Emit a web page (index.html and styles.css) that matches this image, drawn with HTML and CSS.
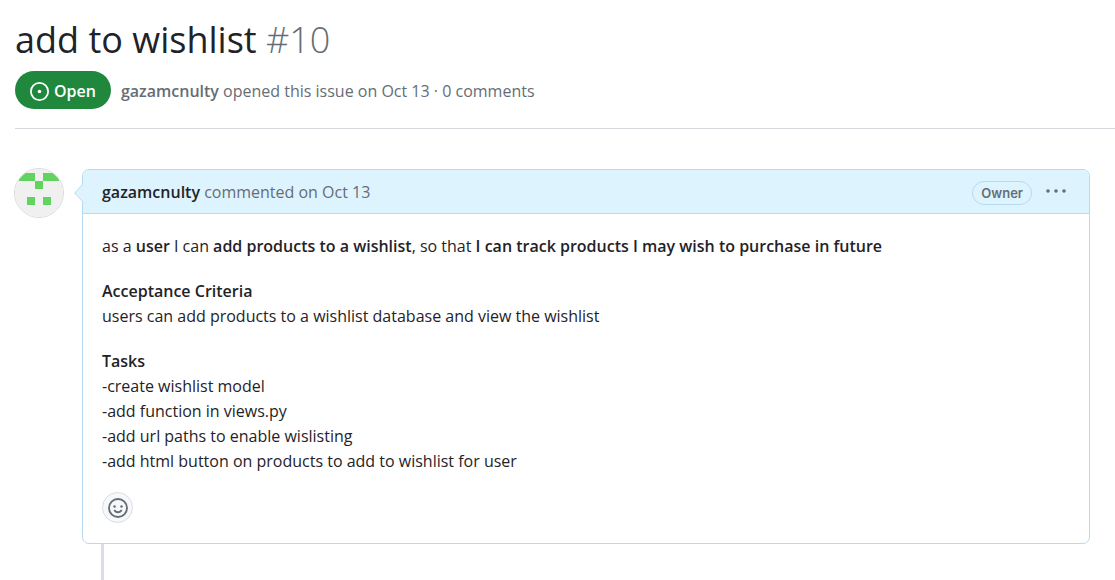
FILE: index.html
```html
<!DOCTYPE html>
<html lang="en">
<head>
<meta charset="utf-8">
<meta name="viewport" content="width=device-width, initial-scale=1">
<title>add to wishlist · Issue #10</title>
<link rel="stylesheet" href="styles.css">
</head>
<body>
<main class="page">
  <header class="issue-header">
    <h1 class="issue-title">add to wishlist <span class="issue-number">#10</span></h1>
    <div class="issue-meta">
      <span class="state">
        <svg class="state-icon" viewBox="0 0 16 16" aria-hidden="true"><path d="M8 9.5a1.5 1.5 0 1 0 0-3 1.5 1.5 0 0 0 0 3Z"/><path d="M8 0a8 8 0 1 1 0 16A8 8 0 0 1 8 0ZM1.5 8a6.5 6.5 0 1 0 13 0 6.5 6.5 0 0 0-13 0Z"/></svg>
        Open
      </span>
      <p class="opened"><a class="meta-author" href="#gazamcnulty">gazamcnulty</a> opened this issue on Oct 13 · 0 comments</p>
    </div>
  </header>

  <div class="timeline">
    <a class="avatar" href="#gazamcnulty" aria-label="gazamcnulty">
      <svg viewBox="0 0 48 48" aria-hidden="true"><rect width="48" height="48" fill="#f0f0f0"/><path fill="#61d35f" d="M4 4h16v8H4zM28 4h16v8H28zM20 12h8v8h-8zM12 28h8v8h-8zM28 28h8v8h-8z"/></svg>
    </a>
    <div class="thread">
      <article class="comment">
        <header class="comment-header">
          <svg class="caret" viewBox="0 0 9 18" aria-hidden="true"><path class="caret-fill" d="M9 0 0.7 9 9 18Z"/><path class="caret-line" d="M9 0 0.7 9 9 18"/></svg>
          <p class="comment-byline"><a class="comment-author" href="#gazamcnulty">gazamcnulty</a> commented on <a class="comment-date" href="#comment">Oct 13</a></p>
          <span class="role">Owner</span>
          <button class="menu-button" type="button" aria-label="Show options">
            <svg viewBox="0 0 20 4" aria-hidden="true"><circle cx="2" cy="2" r="1.8"/><circle cx="10" cy="2" r="1.8"/><circle cx="18" cy="2" r="1.8"/></svg>
          </button>
        </header>
        <div class="comment-body">
          <p>as a <strong>user</strong> I can <strong>add products to a wishlist</strong>, so that <strong>I can track products I may wish to purchase in future</strong></p>
          <p><strong>Acceptance Criteria</strong><br>users can add products to a wishlist database and view the wishlist</p>
          <p><strong>Tasks</strong><br>-create wishlist model<br>-add function in views.py<br>-add url paths to enable wislisting<br>-add html button on products to add to wishlist for user</p>
          <button class="react-button" type="button" aria-label="Add your reaction">
            <svg viewBox="0 0 16 16" aria-hidden="true"><circle class="face-line" cx="8" cy="8" r="7.2"/><circle cx="5.2" cy="6.8" r="1"/><circle cx="10.8" cy="6.8" r="1"/><path class="face-line" d="M5.4 10.1c1.2 1.7 4 1.7 5.2 0"/></svg>
          </button>
        </div>
      </article>
      <div class="thread-line"></div>
    </div>
  </div>
</main>
</body>
</html>
```
FILE: styles.css
```css
* {
  box-sizing: border-box;
}

body {
  margin: 0;
  background: #fff;
  color: #1f2328;
  font-family: "Open Sans", "Noto Sans", sans-serif;
  font-size: 16px;
  line-height: 25px;
}

h1, p {
  margin: 0;
}

a {
  color: inherit;
  text-decoration: none;
}

button {
  display: flex;
  align-items: center;
  justify-content: center;
  padding: 0;
  border: 0;
  background: none;
  cursor: pointer;
}

svg {
  display: block;
}

strong {
  font-weight: 550;
}

.page {
  padding: 16px 0 0 15px;
}

.issue-header {
  padding-bottom: 19px;
  border-bottom: 1px solid #d5d8dc;
}

.issue-title {
  margin-bottom: 7px;
  font-size: 36px;
  font-weight: 400;
  line-height: 48px;
}

.issue-number {
  color: #656d76;
  font-weight: 300;
}

.issue-meta {
  display: flex;
  align-items: center;
  gap: 10px;
  color: #656d76;
}

.state {
  display: flex;
  align-items: center;
  gap: 5px;
  padding: 7px 15px 5px;
  border-radius: 20px;
  background: #1f883d;
  color: #fff;
  font-weight: 600;
  line-height: 26px;
}

.state-icon {
  width: 19px;
  height: 19px;
  fill: currentColor;
}

.opened {
  padding-top: 2px;
}

.meta-author,
.comment-author {
  font-weight: 550;
}

.timeline {
  display: flex;
  align-items: flex-start;
  gap: 18px;
  padding: 39px 25px 0 0;
}

.avatar {
  flex: none;
  width: 50px;
  margin-left: -1px;
  overflow: hidden;
  border: 1px solid #d8dbdf;
  border-radius: 50%;
}

.thread {
  flex: 1;
  min-width: 0;
  padding-top: 1px;
}

.comment {
  border: 1px solid #b6daf2;
  border-radius: 7px;
}

.comment-header {
  position: relative;
  display: flex;
  align-items: center;
  padding: 10px 22px 8px 19px;
  border-bottom: 1px solid #b6daf2;
  border-radius: 6px 6px 0 0;
  background: #ddf4ff;
  color: #656d76;
}

.caret {
  position: absolute;
  top: 14px;
  left: -9px;
  width: 9px;
  height: 18px;
}

.caret-fill {
  fill: #ddf4ff;
}

.caret-line {
  fill: none;
  stroke: #b6daf2;
}

.comment-byline {
  flex: 1;
}

.comment-author {
  color: #1f2328;
}

.role {
  margin-right: 13px;
  padding: 0 8px;
  border: 1px solid #b6daf2;
  border-radius: 12px;
  font-family: Inter, sans-serif;
  font-size: 13px;
  font-weight: 600;
  line-height: 22px;
}

.menu-button {
  width: 22px;
  height: 20px;
  padding-bottom: 4px;
}

.menu-button svg {
  width: 20px;
  height: 4px;
  fill: #656d76;
}

.comment-body {
  padding: 20px 20px 20px 19px;
}

.comment-body p {
  margin-bottom: 20px;
}

.comment-body p:last-of-type {
  margin-bottom: 18px;
}

.react-button {
  width: 31px;
  height: 31px;
  border: 1px solid #d8dee4;
  border-radius: 50%;
  background: #f6f8fa;
}

.react-button svg {
  width: 20px;
  height: 20px;
  fill: #656d76;
}

.face-line {
  fill: none;
  stroke: #656d76;
  stroke-width: 1.5;
  stroke-linecap: round;
}

.thread-line {
  width: 3px;
  height: 37px;
  margin-left: 19px;
  background: #d8dee4;
}
```
